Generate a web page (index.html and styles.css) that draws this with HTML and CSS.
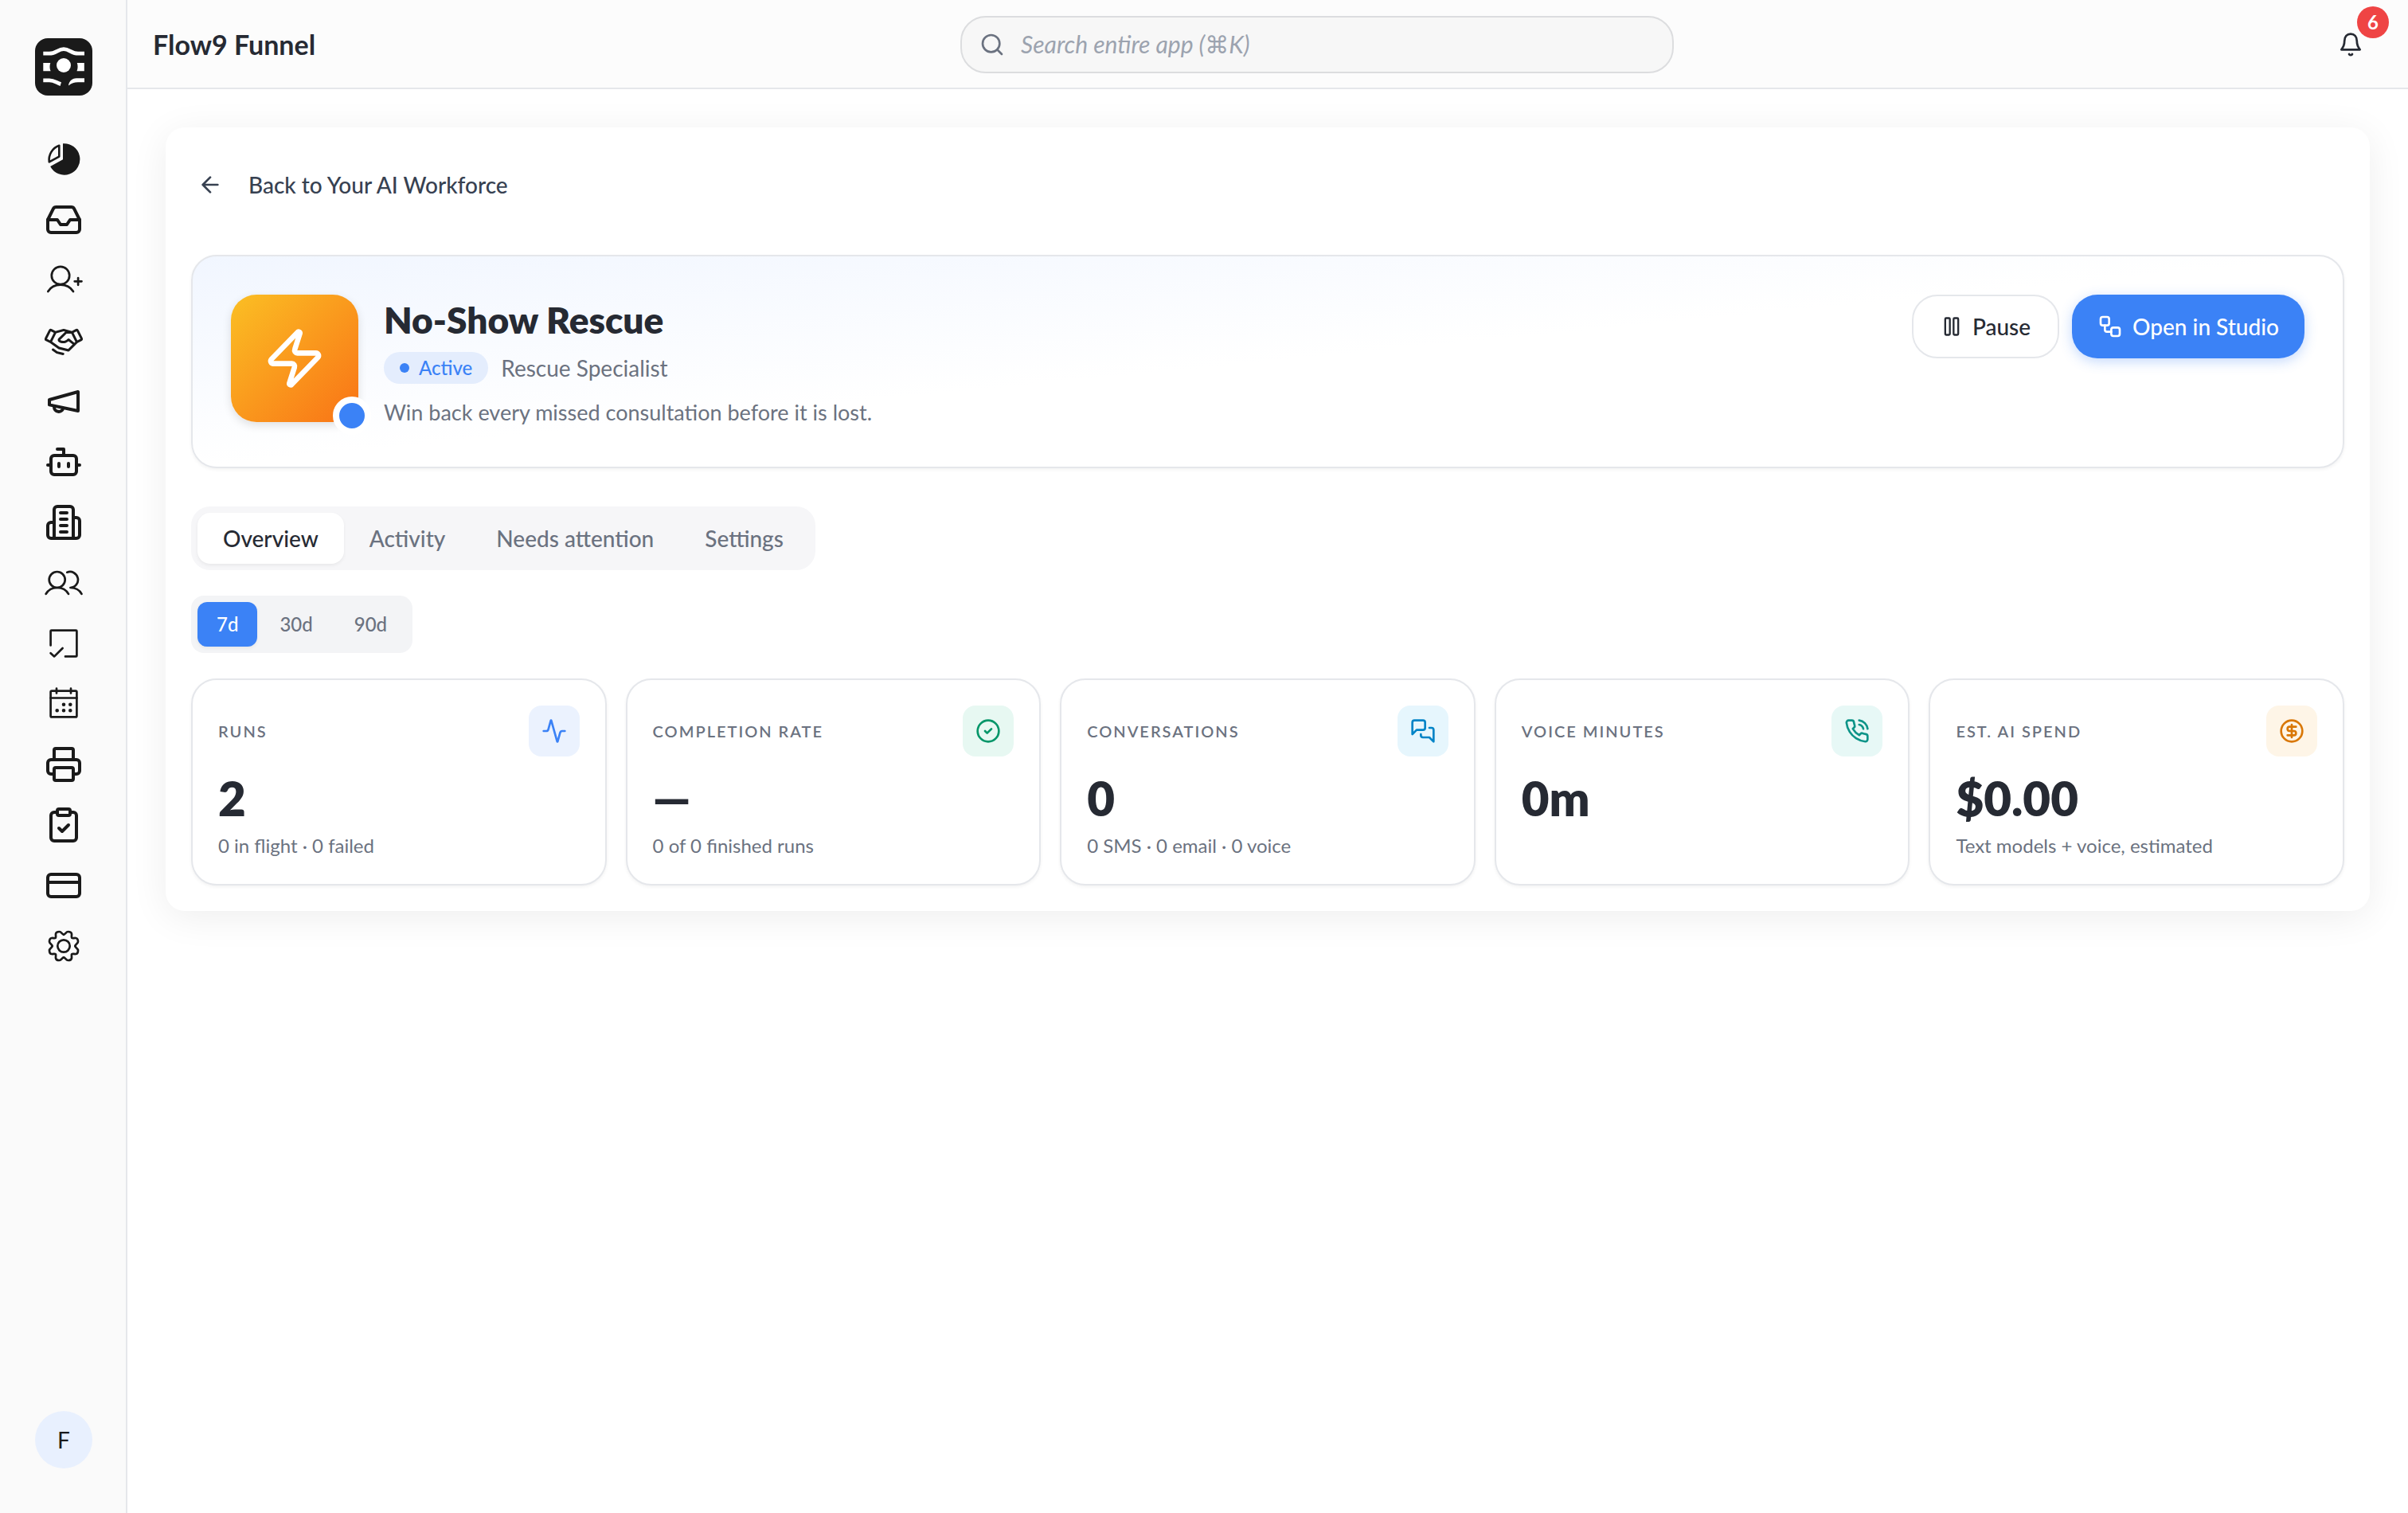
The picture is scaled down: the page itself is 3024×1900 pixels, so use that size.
FILE: index.html
```html
<!DOCTYPE html>
<html lang="en">
<head>
    <meta charset="UTF-8">
    <meta name="viewport" content="width=device-width, initial-scale=1.0">
    <title>No-Show Rescue - Flow9 Funnel</title>
    <link rel="stylesheet" href="styles.css">
</head>
<body>
    <aside class="sidebar">
        <a class="logo" href="#" aria-label="Home">
            <svg viewBox="0 0 72 72" fill="#fff">
                <path d="M10.3 19.2H18C26 19.2 29 13.6 36 13.6S46 19.2 54 19.2H62" fill="none" stroke="#fff" stroke-width="4.8"/>
                <path d="M10.3 31H19.3C18.2 34 18.2 38 19.6 41.2H10.3zM61.8 31H52.8C53.9 34 53.9 38 52.5 41.2H61.8z"/>
                <circle cx="36" cy="34" r="9"/>
                <path d="M10.3 52.8H18C24 52.8 27 56 32.3 57.6" fill="none" stroke="#fff" stroke-width="4.8"/>
                <path d="M62 50.3H52C46 50.6 42.5 54.5 42 59.5C46 56.5 49 55.3 54 55.3H62z"/>
            </svg>
        </a>
        <nav class="nav">
            <a href="#" aria-label="Dashboard">
                <svg viewBox="0 0 48 48">
                    <path d="M23 4.3A19.7 19.7 0 1 1 7.2 33L23 24.3z" fill="#1a1a1a"/>
                    <path d="M18.3 6.8V20.6L5.8 27.4A19 19 0 0 1 18.3 6.8z" fill="none" stroke="#1a1a1a" stroke-width="2.6" stroke-linejoin="round"/>
                </svg>
            </a>
            <a href="#" aria-label="Inbox">
                <svg class="line" viewBox="0 0 24 24">
                    <path d="M22 12h-6l-2 3h-4l-2-3H2"/>
                    <path d="M5.45 5.11 2 12v6a2 2 0 0 0 2 2h16a2 2 0 0 0 2-2v-6l-3.45-6.89A2 2 0 0 0 16.76 4H7.24a2 2 0 0 0-1.79 1.11z"/>
                </svg>
            </a>
            <a href="#" aria-label="Leads">
                <svg class="line thin" viewBox="0 0 48 48">
                    <circle cx="20" cy="18" r="11.2"/>
                    <path d="M4.3 38C11 26.8 29 26.8 36 38M37.7 25.3h8.8M42.1 21v8.8"/>
                </svg>
            </a>
            <a href="#" aria-label="Deals">
                <svg viewBox="0 0 256 256" fill="#1a1a1a">
                    <path d="M254.3,107.91,228.78,56.85a16,16,0,0,0-21.47-7.15L182.44,62.13,130.05,48.27a8.14,8.14,0,0,0-4.1,0L73.56,62.13,48.69,49.7a16,16,0,0,0-21.47,7.15L1.7,107.9a16,16,0,0,0,7.15,21.47l27,13.51,55.49,39.63a8.06,8.06,0,0,0,2.71,1.25l64,16a8,8,0,0,0,7.6-2.1l55.07-55.08,26.42-13.21a16,16,0,0,0,7.15-21.46Zm-54.89,33.37L165,113.72a8,8,0,0,0-10.68.61C136.51,132.27,116.66,130,104,122L147.24,80h31.81l27.21,54.41ZM41.53,64,62,74.22,36.43,125.27,16,115.06Zm116,119.13L99.42,168.61l-49.2-35.14,28-56L128,64.28l9.8,2.59-45,43.68-.08.09a16,16,0,0,0,2.72,24.81c20.56,13.13,45.37,11,64.91-5L188,152.66Zm62-57.87-25.52-51L214.47,64,240,115.06Zm-87.75,92.67a8,8,0,0,1-7.75,6.06,8.13,8.13,0,0,1-1.95-.24L80.41,213.33a7.89,7.89,0,0,1-2.71-1.25L51.35,193.26a8,8,0,0,1,9.3-13l25.11,17.94L126,208.24A8,8,0,0,1,131.7,217.94Z"/>
                </svg>
            </a>
            <a href="#" aria-label="Campaigns">
                <svg class="line" viewBox="0 0 24 24">
                    <path d="M3 11 21 6v12L3 14.2z"/>
                    <path d="M6 15.5a2.9 2.9 0 0 0 5.7.8"/>
                </svg>
            </a>
            <a href="#" aria-label="AI Workforce">
                <svg class="line" viewBox="0 0 24 24">
                    <path d="M12 8V4H8"/>
                    <rect width="16" height="12" x="4" y="8" rx="2"/>
                    <path d="M2 14h2M20 14h2M15 13v2M9 13v2"/>
                </svg>
            </a>
            <a href="#" aria-label="Companies">
                <svg class="line" viewBox="0 0 24 24">
                    <path d="M6 22V4a2 2 0 0 1 2-2h8a2 2 0 0 1 2 2v18Z"/>
                    <path d="M6 12H4a2 2 0 0 0-2 2v6a2 2 0 0 0 2 2h2M18 9h2a2 2 0 0 1 2 2v9a2 2 0 0 1-2 2h-2M10 6h4M10 10h4M10 14h4M10 18h4"/>
                </svg>
            </a>
            <a href="#" aria-label="Contacts">
                <svg class="line thin" viewBox="0 0 48 48">
                    <circle cx="15.7" cy="20" r="10"/>
                    <path d="M1.7 37.8C7.8 27.4 24 27.4 30 37.8M28.3 10.7A10 10 0 1 1 32.4 30C38 30 43.5 32.3 46.5 37.8"/>
                </svg>
            </a>
            <a href="#" aria-label="Tasks">
                <svg class="line thin" viewBox="0 0 48 48">
                    <path d="M7.6 26.5V8.6a1 1 0 0 1 1-1h30.8a1 1 0 0 1 1 1v30.8a1 1 0 0 1-1 1H26"/>
                    <path d="M7.6 36.2l4.6 4.2L22.6 30"/>
                </svg>
            </a>
            <a href="#" aria-label="Calendar">
                <svg class="line thin" viewBox="0 0 48 48">
                    <rect x="7.6" y="7.6" width="32.8" height="32.8" rx="1.5"/>
                    <path d="M7.6 16.5h32.8M15 4.5v6M33 4.5v6"/>
                    <path class="dots" d="M24 24.7h0M32.3 24.7h0M15.7 32.3h0M24 32.3h0M32.3 32.3h0"/>
                </svg>
            </a>
            <a href="#" aria-label="Print">
                <svg class="line" viewBox="0 0 24 24">
                    <path d="M6 18H4a2 2 0 0 1-2-2v-5a2 2 0 0 1 2-2h16a2 2 0 0 1 2 2v5a2 2 0 0 1-2 2h-2M6 9V3a1 1 0 0 1 1-1h10a1 1 0 0 1 1 1v6"/>
                    <rect x="6" y="14" width="12" height="8" rx="1"/>
                </svg>
            </a>
            <a href="#" aria-label="Forms">
                <svg class="line" viewBox="0 0 24 24">
                    <rect width="8" height="4" x="8" y="2" rx="1"/>
                    <path d="M16 4h2a2 2 0 0 1 2 2v14a2 2 0 0 1-2 2H6a2 2 0 0 1-2-2V6a2 2 0 0 1 2-2h2M9 14l2 2 4-4"/>
                </svg>
            </a>
            <a href="#" aria-label="Billing">
                <svg class="line" viewBox="0 0 24 24">
                    <rect width="20" height="14" x="2" y="5" rx="2"/>
                    <path d="M2 10h20"/>
                </svg>
            </a>
            <a href="#" aria-label="Settings">
                <svg class="line thin" viewBox="0 0 48 48">
                    <path id="cog" d="M24 9.6C26 9.6 27 6 29.4 6C31.8 6 33.8 7.2 34 9C34.2 11 33.4 12.9 34.2 13.8C35.1 14.6 37 13.8 39 14C40.8 14.2 42 16.2 42 18.6C42 21 38.4 22 38.4 24"/>
                    <use href="#cog" transform="rotate(90 24 24)"/>
                    <use href="#cog" transform="rotate(180 24 24)"/>
                    <use href="#cog" transform="rotate(270 24 24)"/>
                    <circle cx="24" cy="24" r="7.7"/>
                </svg>
            </a>
        </nav>
        <button class="avatar" type="button">F</button>
    </aside>

    <div class="page">
        <header class="topbar">
            <h1>Flow9 Funnel</h1>
            <label class="search">
                <svg class="line" viewBox="0 0 24 24"><circle cx="11" cy="11" r="8"/><path d="m21 21-4.3-4.3"/></svg>
                <input type="search" placeholder="Search entire app (⌘K)" aria-label="Search entire app">
            </label>
            <button class="bell" type="button" aria-label="Notifications">
                <svg class="line thin" viewBox="0 0 32 32">
                    <path d="M4.3 22.3C7 19 8.2 17 8.2 11.5C8.2 5.5 11.5 2.6 16 2.6S23.8 5.5 23.8 11.5C23.8 17 25 19 27.7 22.3z"/>
                    <path d="M14 28c.6 1.6 3.4 1.6 4 0"/>
                </svg>
                <span class="count">6</span>
            </button>
        </header>

        <main class="panel">
            <a class="back" href="#">
                <span class="back-icon"><svg class="line" viewBox="0 0 24 24"><path d="m12 19-7-7 7-7M19 12H5"/></svg></span>
                Back to Your AI Workforce
            </a>

            <section class="hero">
                <div class="agent-icon">
                    <svg class="line" viewBox="0 0 24 24"><path d="M4 14a1 1 0 0 1-.78-1.63l9.9-10.2a.5.5 0 0 1 .86.46l-1.92 6.02A1 1 0 0 0 13 10h7a1 1 0 0 1 .78 1.63l-9.9 10.2a.5.5 0 0 1-.86-.46l1.92-6.02A1 1 0 0 0 11 14z"/></svg>
                    <span class="presence"></span>
                </div>
                <div class="agent-info">
                    <h2>No-Show Rescue</h2>
                    <div class="role"><span class="status">Active</span>Rescue Specialist</div>
                    <p>Win back every missed consultation before it is lost.</p>
                </div>
                <div class="actions">
                    <button class="btn" type="button">
                        <svg class="line" viewBox="0 0 24 24"><rect x="14" y="3" width="5" height="18" rx="1"/><rect x="5" y="3" width="5" height="18" rx="1"/></svg>
                        Pause
                    </button>
                    <button class="btn primary" type="button">
                        <svg class="line" viewBox="0 0 24 24"><rect width="8" height="8" x="3" y="3" rx="2"/><path d="M7 11v4a2 2 0 0 0 2 2h4"/><rect width="8" height="8" x="13" y="13" rx="2"/></svg>
                        Open in Studio
                    </button>
                </div>
            </section>

            <div class="tabs">
                <button class="active" type="button">Overview</button>
                <button type="button">Activity</button>
                <button type="button">Needs attention</button>
                <button type="button">Settings</button>
            </div>

            <div class="range">
                <button class="active" type="button">7d</button>
                <button type="button">30d</button>
                <button type="button">90d</button>
            </div>

            <section class="stats">
                <article class="card">
                    <div class="card-head">
                        <h3>Runs</h3>
                        <span class="chip blue"><svg class="line" viewBox="0 0 24 24"><path d="M22 12h-2.48a2 2 0 0 0-1.93 1.46l-2.35 8.36a.25.25 0 0 1-.48 0L9.24 2.18a.25.25 0 0 0-.48 0l-2.35 8.36A2 2 0 0 1 4.49 12H2"/></svg></span>
                    </div>
                    <div class="value">2</div>
                    <p>0 in flight · 0 failed</p>
                </article>
                <article class="card">
                    <div class="card-head">
                        <h3>Completion rate</h3>
                        <span class="chip green"><svg class="line" viewBox="0 0 24 24"><circle cx="12" cy="12" r="10"/><path d="m9 12 2 2 4-4"/></svg></span>
                    </div>
                    <div class="value">—</div>
                    <p>0 of 0 finished runs</p>
                </article>
                <article class="card">
                    <div class="card-head">
                        <h3>Conversations</h3>
                        <span class="chip sky"><svg class="line" viewBox="0 0 24 24"><path d="M14 9a2 2 0 0 1-2 2H6l-4 4V4a2 2 0 0 1 2-2h8a2 2 0 0 1 2 2z"/><path d="M18 9h2a2 2 0 0 1 2 2v11l-4-4h-6a2 2 0 0 1-2-2v-1"/></svg></span>
                    </div>
                    <div class="value">0</div>
                    <p>0 SMS · 0 email · 0 voice</p>
                </article>
                <article class="card">
                    <div class="card-head">
                        <h3>Voice minutes</h3>
                        <span class="chip teal"><svg class="line" viewBox="0 0 24 24"><path d="M22 16.92v3a2 2 0 0 1-2.18 2 19.79 19.79 0 0 1-8.63-3.07 19.5 19.5 0 0 1-6-6 19.79 19.79 0 0 1-3.07-8.67A2 2 0 0 1 4.11 2h3a2 2 0 0 1 2 1.72 12.84 12.84 0 0 0 .7 2.81 2 2 0 0 1-.45 2.11L8.09 9.91a16 16 0 0 0 6 6l1.27-1.27a2 2 0 0 1 2.11-.45 12.84 12.84 0 0 0 2.81.7A2 2 0 0 1 22 16.92z"/><path d="M14.05 2a9 9 0 0 1 8 7.94M14.05 6A5 5 0 0 1 18 10"/></svg></span>
                    </div>
                    <div class="value">0m</div>
                </article>
                <article class="card">
                    <div class="card-head">
                        <h3>Est. AI spend</h3>
                        <span class="chip amber"><svg class="line" viewBox="0 0 24 24"><circle cx="12" cy="12" r="10"/><path d="M16 8h-6a2 2 0 1 0 0 4h4a2 2 0 1 1 0 4H8M12 18V6"/></svg></span>
                    </div>
                    <div class="value">$0.00</div>
                    <p>Text models + voice, estimated</p>
                </article>
            </section>
        </main>
    </div>
</body>
</html>
```
FILE: styles.css
```css
* {
    margin: 0;
    padding: 0;
    box-sizing: border-box;
}

body {
    display: flex;
    min-height: 100vh;
    font-family: Lato, "Open Sans", "DejaVu Sans", sans-serif;
    font-size: 28px;
    line-height: 40px;
    color: #262a33;
    background: #fff;
}

a {
    color: inherit;
    text-decoration: none;
}

button,
input {
    font: inherit;
    color: inherit;
    border: none;
    background: none;
}

button {
    cursor: pointer;
}

svg {
    display: block;
    flex-shrink: 0;
    width: 32px;
    height: 32px;
}

.line {
    fill: none;
    stroke: currentColor;
    stroke-width: 2;
    stroke-linecap: round;
    stroke-linejoin: round;
}

.thin {
    stroke-width: 2.7;
}

.dots {
    stroke-width: 4.6;
}

/* Sidebar */
.sidebar {
    display: flex;
    flex-direction: column;
    align-items: center;
    flex-shrink: 0;
    width: 160px;
    padding: 48px 0 56px;
    background: #fafafa;
    box-shadow: inset -2px 0 #e5e7eb;
    color: #1a1a1a;
}

.logo {
    border-radius: 16px;
    background: #1a1a1a;
}

.logo svg {
    width: 72px;
    height: 72px;
}

.nav {
    display: flex;
    flex-direction: column;
    gap: 28px;
    margin-top: 56px;
}

.nav svg {
    width: 48px;
    height: 48px;
}

.avatar {
    width: 72px;
    height: 72px;
    margin-top: auto;
    border-radius: 50%;
    background: #e8f0fe;
}

/* Top bar */
.page {
    flex: 1;
    min-width: 0;
}

.topbar {
    display: flex;
    align-items: center;
    justify-content: space-between;
    height: 112px;
    padding: 0 32px;
    background: #fcfcfc;
    box-shadow: inset 0 -2px #e5e7eb;
}

.topbar h1 {
    font-size: 34px;
    font-weight: 700;
}

.search {
    display: flex;
    align-items: center;
    gap: 20px;
    width: 896px;
    height: 72px;
    padding: 0 22px;
    border: 2px solid #dcdddf;
    border-radius: 32px;
    background: #f7f7f7;
    color: #6b7280;
}

.search input {
    flex: 1;
    outline: none;
}

.search input::placeholder {
    color: #9ca3af;
    font-size: 30px;
    font-style: italic;
}

.bell {
    position: relative;
    display: flex;
    align-items: center;
    justify-content: center;
    width: 80px;
    height: 80px;
}

.count {
    position: absolute;
    top: -8px;
    right: -8px;
    width: 40px;
    border-radius: 50%;
    background: #ef4444;
    color: #fff;
    font-size: 24px;
    font-weight: 700;
}

/* Panel */
.panel {
    margin: 48px;
    padding: 32px;
    border-radius: 24px;
    background: #fff;
    box-shadow: 0 8px 48px rgba(0, 0, 0, 0.07);
}

.back {
    display: inline-flex;
    align-items: center;
    gap: 24px;
    height: 80px;
    color: #374151;
    font-weight: 500;
}

.back-icon {
    padding: 8px;
}

.hero {
    display: flex;
    gap: 32px;
    margin-top: 48px;
    padding: 48px;
    border: 2px solid #e5e7eb;
    border-radius: 32px;
    background: linear-gradient(to bottom right, #f1f6ff, #fff 50%);
    box-shadow: 0 2px 4px rgba(0, 0, 0, 0.05);
}

.agent-icon {
    position: relative;
    display: flex;
    align-items: center;
    justify-content: center;
    width: 160px;
    height: 160px;
    border-radius: 32px;
    background: linear-gradient(135deg, #fbbf24, #f97316);
    box-shadow: 0 4px 12px rgba(0, 0, 0, 0.12);
    color: #fff;
}

.agent-icon svg {
    width: 80px;
    height: 80px;
}

.presence {
    position: absolute;
    right: -16px;
    bottom: -16px;
    width: 48px;
    height: 48px;
    border: 8px solid #fff;
    border-radius: 50%;
    background: #3b82f6;
}

.agent-info {
    flex: 1;
    color: #6b7280;
}

.agent-info h2 {
    color: #262a33;
    font-size: 46px;
    font-weight: 800;
    line-height: 64px;
}

.agent-info p {
    font-size: 27px;
}

.role {
    display: flex;
    align-items: center;
    gap: 16px;
    margin: 8px 0 16px;
}

.status {
    display: flex;
    align-items: center;
    gap: 12px;
    padding: 0 20px;
    border-radius: 20px;
    background: #e4edfd;
    color: #3b82f6;
    font-size: 24px;
    font-weight: 500;
}

.status::before {
    content: "";
    width: 12px;
    height: 12px;
    border-radius: 50%;
    background: #3b82f6;
}

.actions {
    display: flex;
    align-items: flex-start;
    gap: 16px;
}

.btn {
    display: flex;
    align-items: center;
    gap: 12px;
    height: 80px;
    padding: 0 34px;
    border: 2px solid #e5e7eb;
    border-radius: 32px;
    background: #fff;
    font-weight: 500;
}

.btn svg {
    width: 28px;
    height: 28px;
}

.btn.primary {
    padding: 0 32px;
    border: none;
    background: #3b82f6;
    box-shadow: 0 4px 16px rgba(59, 130, 246, 0.3);
    color: #fff;
}

.btn.primary svg {
    width: 32px;
    height: 32px;
}

/* Tabs and period switch */
.tabs,
.range {
    display: flex;
    width: fit-content;
    padding: 8px;
    color: #6b7280;
    font-weight: 500;
}

.tabs {
    margin-top: 48px;
    border-radius: 24px;
    background: #f6f6f8;
}

.tabs button {
    height: 64px;
    padding: 0 32px;
    border-radius: 16px;
}

.tabs .active {
    background: #fff;
    box-shadow: 0 2px 4px rgba(0, 0, 0, 0.06);
    color: #262a33;
}

.range {
    gap: 4px;
    margin-top: 32px;
    border-radius: 16px;
    background: #f3f4f6;
    font-size: 24px;
}

.range button {
    height: 56px;
    padding: 0 24px;
    border-radius: 12px;
}

.range .active {
    background: #3b82f6;
    box-shadow: 0 2px 4px rgba(0, 0, 0, 0.06);
    color: #fff;
}

/* Stat cards */
.stats {
    display: grid;
    grid-template-columns: repeat(5, 1fr);
    gap: 24px;
    margin-top: 32px;
}

.card {
    padding: 32px;
    border: 2px solid #e5e7eb;
    border-radius: 32px;
    background: #fff;
    box-shadow: 0 2px 4px rgba(0, 0, 0, 0.05);
}

.card-head {
    display: flex;
    align-items: center;
    justify-content: space-between;
}

.card h3 {
    color: #6b7280;
    font-size: 20px;
    font-weight: 600;
    letter-spacing: 2px;
    text-transform: uppercase;
}

.card p {
    color: #6b7280;
    font-size: 24px;
    line-height: 32px;
}

.chip {
    padding: 16px;
    border-radius: 16px;
}

.blue {
    background: #ebf2fe;
    color: #3b82f6;
}

.green {
    background: #e7f8f2;
    color: #059669;
}

.sky {
    background: #e6f6fd;
    color: #0284c7;
}

.teal {
    background: #e7f8f6;
    color: #0d9488;
}

.amber {
    background: #fef5e7;
    color: #d97706;
}

.value {
    margin: 16px 0 8px;
    font-size: 60px;
    font-weight: 800;
    line-height: 72px;
}
```
